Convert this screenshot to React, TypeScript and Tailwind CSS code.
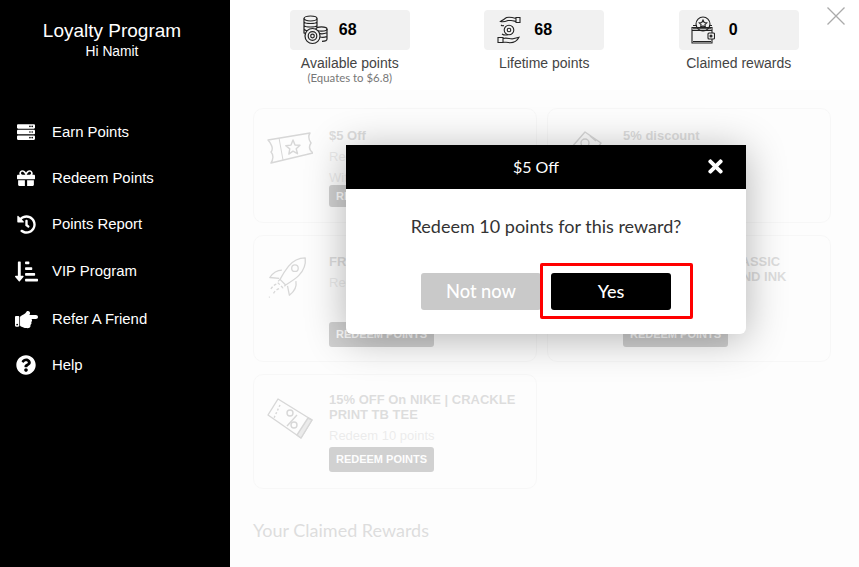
import React from "react";
import { FaServer, FaGift, FaHistory, FaSortAmountDownAlt, FaHandPointRight, FaQuestionCircle, FaTimes } from "react-icons/fa";

const lib = "font-['Liberation_Sans',Arial,sans-serif]";
const lato = "font-['Lato',sans-serif]";

const nav = [
  { label: "Earn Points", icon: <FaServer size={18} />, h: "h-[46px]" },
  { label: "Redeem Points", icon: <FaGift size={18} />, h: "h-[46px]" },
  { label: "Points Report", icon: <FaHistory size={19} />, h: "h-[46px]" },
  { label: "VIP Program", icon: <FaSortAmountDownAlt size={23} />, h: "h-[48px]" },
  { label: "Refer A Friend", icon: <FaHandPointRight size={23} />, h: "h-[48px]" },
  { label: "Help", icon: <FaQuestionCircle size={20} />, h: "h-[44px]" },
];

const Coins = () => (
  <svg width="26" height="30" viewBox="0 0 26 30" fill="none" stroke="#222" strokeWidth="1.2">
    <ellipse cx="8.5" cy="3.5" rx="6.5" ry="2.5" />
    <path d="M2 3.5v15M15 3.5V12M2 7c1 2 12 2 13 0M2 10.5c1 2 12 2 13 0M2 14c1 1.6 3 2 5 2M2 17.5c.5 1 1.500 1.500 3 1.800" />
    <ellipse cx="19.500" cy="14" rx="5.500" ry="2.200" />
    <path d="M14 14v9M25 14v10c0 1.500-3 2.300-5 2.300M16 18c2 1 6 1 9-.2M18 22c2 .5 5 .3 7-.5" />
    <circle cx="10.500" cy="21" r="7.500" fill="#f1f1f1" />
    <circle cx="10.500" cy="21" r="4.300" />
    <circle cx="10.500" cy="21" r="1.800" />
  </svg>
);

const Hands = () => (
  <svg width="24" height="30" viewBox="0 0 24 30" fill="none" stroke="#222" strokeWidth="1.1">
    <path d="M19 2.500h4v5h-4zM19 3.500c-5-1.500-9-2-11 0-1.500 1.200-3 2-4.500 3 2 .6 5 0 7.500-1h3c2 0 3 .5 5 1" />
    <circle cx="12" cy="15" r="4.800" />
    <circle cx="12" cy="15" r="1.800" />
    <path d="M1 22.500h5v5H1zM6 23.500c4-1.300 7 .8 10 .3l6-1.500c-1.500 3-5 5.500-9 5.500-3 0-5-1-7-.8" />
    <path d="M4 10c1 1 2 .8 3 .6M5 19c2 1.500 4 1.200 6 .8" />
  </svg>
);

const Wallet = () => (
  <svg width="24" height="30" viewBox="0 0 24 30" fill="none" stroke="#222" strokeWidth="1.100">
    <circle cx="12" cy="9" r="7" />
    <path d="M12 5l1.200 2.500 2.600.4-1.900 1.800.5 2.600-2.400-1.300-2.400 1.300.5-2.600L8.200 7.900l2.600-.4z" />
    <path d="M2 10.500h4M18 10.500h3" />
    <path d="M1 12.500h20v3H1zM1 15.500V28h20v-4M21 15.500V18" />
    <path d="M2 26.500h18M2 13.800h18" />
    <rect x="17" y="18" width="6.500" height="6" rx="1" fill="#f1f1f1" />
    <circle cx="20" cy="21" r="1" fill="#222" />
  </svg>
);

const Ticket = () => (
  <svg className="mt-[4px]" width="46" height="32" viewBox="0 0 46 32" fill="none" stroke="#222" strokeWidth="1.400" strokeLinejoin="round">
    <path d="M1 8 43 1c-2 3-1 7 1 10-2 3-2 7 2 10L4 31c2-3 3-8 0-11 3-3 0-9-3-12z" />
    <path d="M12 6l4 22" strokeWidth="1" />
    <path transform="translate(-2 1)" d="M28 7l2 5 5 .3-3.800 3.400 1.300 5-4.500-2.600-4.200 3 1-5.200-4-3.200 5.200-.6z" />
  </svg>
);

const Tag = () => (
  <svg className="ml-[9px] mt-[3px]" width="32" height="40" viewBox="0 0 32 40" fill="none" stroke="#222" strokeWidth="1.400" strokeLinejoin="round">
    <path d="M1 17 15 1l16 11-14 19z" />
    <circle cx="15" cy="12" r="4" />
    <path d="M8 18l10 7M20 5l6 5" />
  </svg>
);

const Rocket = () => (
  <svg className="mt-[3px]" width="41" height="41" viewBox="0 0 42 44" fill="none" stroke="#222" strokeWidth="1.400" strokeLinejoin="round">
    <path d="M40 1c-7 0-13 3-18 9-4 5-7 10-9 14l6 6c5-3 10-6 14-10 5-5 8-11 7-19z" />
    <circle cx="29" cy="12" r="3.500" />
    <path d="M15 14c-5 0-9 2-13 8l10 1M30 26c1 5 0 10-7 15l-2-10" />
    <path d="M13 24l-3 3 6 6 3-3M9 29c-3 1-5 4-7 7M12 34c-3 1-5 3-6 5M1 43h1" strokeDasharray="3 2" />
  </svg>
);

const Percent = () => (
  <svg className="mt-[6px]" width="46" height="41" viewBox="0 0 46 41" fill="none" stroke="#222" strokeWidth="1.400" strokeLinejoin="round">
    <path d="M11 1 45 22 34 40 1 17z" />
    <path d="M41 20 45 22 34 40 30 37z" fill="#999" />
    <path d="M13 7 7 20" strokeDasharray="2 2" />
    <circle cx="23" cy="15" r="3" />
    <circle cx="27" cy="27" r="3" />
    <path d="M20 28 30 17" />
  </svg>
);

function Card({ icon, title, lines, className }: { icon: React.ReactNode; title: string; lines: string[]; className: string }) {
  return (
    <div className={`flex rounded-[10px] border border-[#ddd] bg-white pl-[12px] pr-[12px] ${className}`}>
      <div className="flex w-[63px] shrink-0 items-start pl-[1px]">{icon}</div>
      <div className="flex flex-col">
        <div className={`${lib} text-[13px] font-bold leading-[15px] text-[#444]`}>{title}</div>
        {lines.map((l) => (
          <div key={l} className={`${lib} mt-[6px] text-[13px] leading-[15px] text-[#999]`}>{l}</div>
        ))}
        <button className={`${lib} mt-auto h-[25px] w-[105px] rounded-[3px] bg-black text-[11px] font-bold text-white`}>REDEEM POINTS</button>
      </div>
    </div>
  );
}

function Stat({ icon, value, label, sub, iconClass }: { icon: React.ReactNode; value: string; label: string; sub?: string; iconClass: string }) {
  return (
    <div className="flex w-[120px] flex-col items-center">
      <div className="flex h-10 w-[120px] items-center rounded-[4px] bg-[#f1f1f1]">
        <div className={`flex justify-center ${iconClass}`}>{icon}</div>
        <span className={`${lib} text-[16px] font-bold text-black`}>{value}</span>
      </div>
      <div className={`${lib} mt-[5px] whitespace-nowrap text-[14px] leading-4 text-[#444]`}>{label}</div>
      {sub && <div className={`${lato} whitespace-nowrap text-[11.4px] leading-[14px] text-[#777]`}>{sub}</div>}
    </div>
  );
}

export default function App() {
  return (
    <div className="relative flex h-[567px] w-[859px] overflow-hidden bg-white">
      <aside className="flex w-[230px] shrink-0 flex-col bg-black text-white">
        <div className="flex flex-col items-center pr-[6px] pt-[19px]">
          <div className={`${lib} text-[19px] leading-6`}>Loyalty Program</div>
          <div className={`${lib} mt-[1px] text-[13.8px] leading-4`}>Hi Namit</div>
        </div>
        <nav className="mt-[49px] flex flex-col">
          {nav.map((n) => (
            <div key={n.label} className={`flex items-center ${n.h}`}>
              <div className="flex w-[52px] justify-center">{n.icon}</div>
              <span className={`${lib} text-[14.9px] leading-none`}>{n.label}</span>
            </div>
          ))}
        </nav>
      </aside>

      <main className="flex min-w-0 flex-1 flex-col">
        <header className="flex h-[90px] shrink-0 gap-[74.500px] pl-[59.750px] pt-[10px]">
          <Stat icon={<Coins />} value="68" label="Available points" sub="(Equates to $6.8)" iconClass="w-[49px] pl-[2px]" />
          <Stat icon={<Hands />} value="68" label="Lifetime points" iconClass="w-[50px] pr-[1px]" />
          <Stat icon={<Wallet />} value="0" label="Claimed rewards" iconClass="w-[50px] pr-[2px]" />
        </header>
        <section className="flex-1 bg-[#fdfdfd]">
          <div className="grid grid-cols-[284px_284px] grid-rows-[115px_127px_115px] gap-x-[10px] gap-y-3 pl-[23px] pt-[18px] opacity-[0.17]">
            <Card className="pt-[19px] pb-[15px]" icon={<Ticket />} title="$5 Off" lines={["Redeem 10 points", "With this reward"]} />
            <Card className="pt-[19px] pb-[15px]" icon={<Tag />} title="5% discount" lines={["Redeem 10 points"]} />
            <Card className="pt-[18px] pb-[14px]" icon={<Rocket />} title="FREE SHIPPING" lines={["Redeem 10 points"]} />
            <Card className="pt-[18px] pb-[14px]" icon={<Tag />} title="100% OFF On A CLASSIC CRACKLE PRINT AND INK" lines={["Redeem 10 points"]} />
            <Card className="pt-[17px] pb-[16px]" icon={<Percent />} title="15% OFF On NIKE | CRACKLE PRINT TB TEE" lines={["Redeem 10 points"]} />
          </div>
          <h2 className={`${lato} mt-[30px] pl-[23px] text-[18px] font-normal leading-[22px] text-[#ddd]`}>Your Claimed Rewards</h2>
        </section>
      </main>

      <svg className="absolute left-[827px] top-[7px]" width="18" height="18" viewBox="0 0 18 18" stroke="#aaa" strokeWidth="1.300">
        <path d="M.5.500l17 17M17.500.500l-17 17" />
      </svg>

      <div className="absolute left-[346px] top-[145px] w-[400px] overflow-hidden rounded-b-[6px] bg-white shadow-[0_5px_40px_rgba(0,0,0,0.3)]">
        <div className="relative flex h-[44px] items-center justify-center bg-black pr-[20px]">
          <span className={`${lato} text-[16px] text-white`}>$5 Off</span>
          <FaTimes className="absolute right-[20px] top-[11px] text-white" size={21} />
        </div>
        <div className={`${lato} flex flex-col items-center pt-[25px]`}>
          <p className="text-[18px] leading-6 text-[#333]">Redeem 10 points for this reward?</p>
          <div className="mt-[35px] mb-[24px] flex gap-[10px]">
            <button className="h-[37px] w-[120px] rounded-[3px] bg-[#c9c9c9] text-[18.300px] font-medium text-white">Not now</button>
            <button className="h-[37px] w-[120px] rounded-[3px] bg-black text-[18px] font-medium text-white">Yes</button>
          </div>
        </div>
      </div>

      <div className="absolute left-[540px] top-[263px] h-[56px] w-[153px] rounded-[2px] border-[3px] border-[#f00]" />
    </div>
  );
}
